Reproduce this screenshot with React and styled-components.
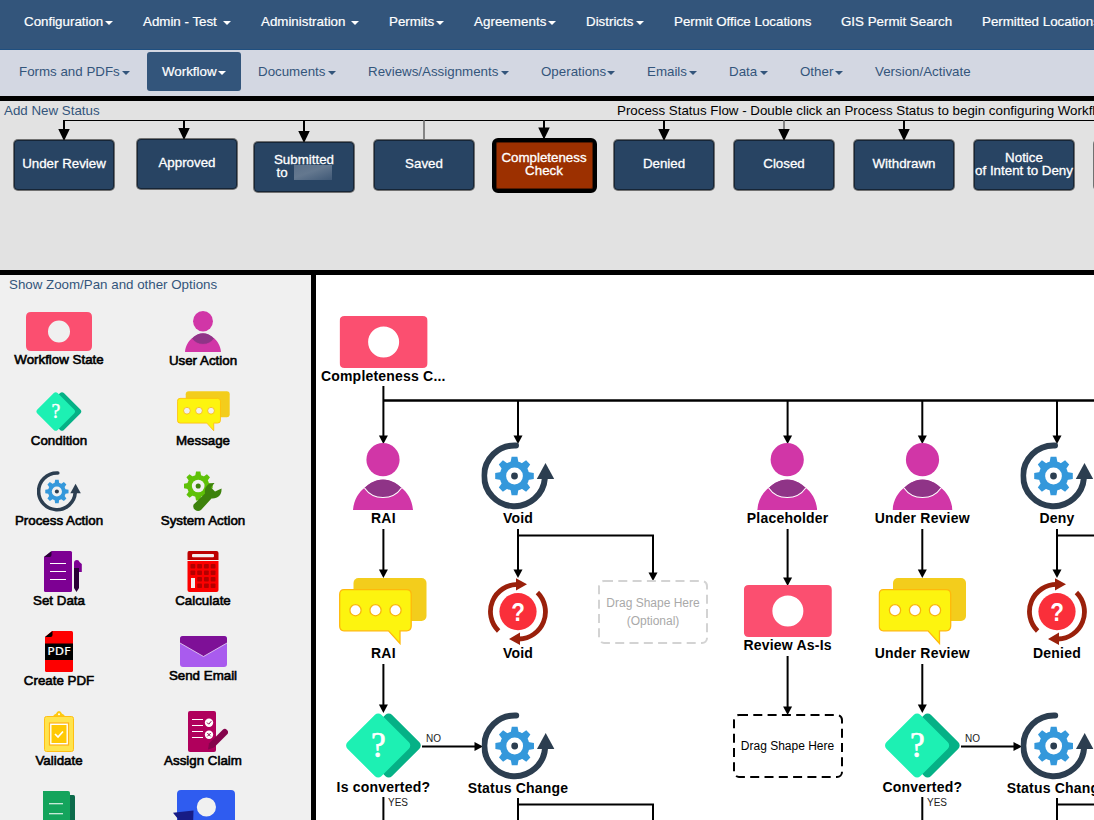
import React from 'react';
import styled, { createGlobalStyle, css } from 'styled-components';

const Global = createGlobalStyle`
  * { box-sizing: border-box; }
  html, body { margin: 0; padding: 0; overflow: hidden; }
  body { font-family: 'Liberation Sans', Arial, sans-serif; font-size: 13.33px; color: #000; }
  svg { display: block; flex: none; }
`;

/* ---------- page frame ---------- */
const Page = styled.div`
  width: 100vw;
  height: 820px;
  display: flex;
  flex-direction: column;
  background: #000;
  overflow: hidden;
`;
const TopNav = styled.nav`
  flex: 0 0 50px;
  display: flex;
  align-items: center;
  padding: 0 0 6px 9px;
  background: #33557b;
  border-bottom: 1px solid #1f4f80;
  color: #fff;
`;
const SubNav = styled.nav`
  flex: 0 0 46px;
  display: flex;
  align-items: flex-start;
  gap: 2px;
  padding: 2px 0 0 4px;
  background: #d3d7e2;
  color: #33557b;
`;
const NavItem = styled.a`
  flex: none;
  display: flex;
  align-items: center;
  justify-content: space-between;
  box-sizing: content-box;
  width: ${(p) => p.$w}px;
  height: 39px;
  padding: 0 15px;
  white-space: nowrap;
  letter-spacing: ${(p) => p.$track || 0}px;
  border-radius: 3px;
  ${(p) => p.$light && css`-webkit-text-stroke: 0.2px #fff;`}
  ${(p) => p.$active && css`
    background: #33557b;
    color: #fff;
    -webkit-text-stroke: 0.2px #fff;
  `}
`;
const Caret = styled.i`
  margin-top: 2px;
  border: 4px solid transparent;
  border-top-color: currentColor;
  border-bottom: 0;
`;
const TextLink = styled.a`
  color: #33557b;
  white-space: nowrap;
`;

const StatusPane = styled.section`
  position: relative;
  flex: 0 0 169px;
  margin-top: 5px;
  background: #e2e2e2;
  overflow: hidden;
`;
const StatusHead = styled.header`
  display: flex;
  padding-left: 4px;
  line-height: 19px;
  white-space: nowrap;
  & > a { flex: 0 0 613px; }
`;
const Workspace = styled.main`
  flex: 1;
  min-height: 0;
  margin-top: 5px;
  display: flex;
  gap: 5px;
`;
const Palette = styled.aside`
  flex: 0 0 311px;
  padding-top: 2px;
  background: #f0f0f0;
  overflow: hidden;
  & > a { display: block; padding-left: 9px; line-height: 15px; }
`;
const PaletteGrid = styled.div`
  display: grid;
  grid-template-columns: 144px 144px;
  grid-auto-rows: 80px;
  margin: 7px 0 0 -13px;
`;
const PaletteItem = styled.div`
  display: flex;
  flex-direction: column;
  align-items: center;
  justify-content: center;
`;
const PaletteLabel = styled.span`
  padding-top: 1px;
  margin-bottom: -1px;
  line-height: 16px;
  white-space: nowrap;
  -webkit-text-stroke: 0.6px #000;
`;
const Canvas = styled.section`
  position: relative;
  flex: 1;
  background: #fff;
  overflow: hidden;
`;
const EdgeLayer = styled.svg`
  position: absolute;
  inset: 0;
`;

/* ---------- diagram nodes ---------- */
const StatusNode = styled.div`
  position: absolute;
  left: ${(p) => p.$x}px;
  top: ${(p) => p.$y}px;
  width: 102px;
  height: 52px;
  display: flex;
  flex-direction: column;
  align-items: center;
  justify-content: center;
  padding-bottom: 3px;
  border: 1px solid rgba(0, 0, 0, 0.5);
  border-radius: 5px;
  background: #284463;
  background-clip: padding-box;
  box-shadow: inset 0 0 0 1px rgba(0, 0, 0, 0.45);
  color: #fff;
  line-height: 13px;
  text-align: center;
  white-space: nowrap;
  -webkit-text-stroke: 0.3px #fff;
  ${(p) => p.$selected && css`
    width: 105px;
    height: 55px;
    padding-bottom: 3px;
    border: 4px solid #000;
    border-radius: 6px;
    background: #9c3000;
  `}
`;
const Row = styled.span`
  display: flex;
  align-items: center;
  height: 13px;
`;
const Redacted = styled.span`
  width: 38px;
  height: 15px;
  margin: 0 0 0 6px;
  background: linear-gradient(160deg, #5b7089, #64788f 45%, #3f5876);
`;
const FlowNode = styled.div`
  position: absolute;
  left: ${(p) => p.$x}px;
  top: ${(p) => p.$y}px;
  transform: translateX(-50%);
  display: flex;
  flex-direction: column;
  align-items: center;
`;
const FlowLabel = styled.span`
  line-height: 16px;
  font-size: 14px;
  font-weight: bold;
  letter-spacing: 0.2px;
  white-space: nowrap;
`;
const EdgeLabel = styled.span`
  position: absolute;
  left: ${(p) => p.$x}px;
  top: ${(p) => p.$y}px;
  font-size: 10px;
  line-height: 12px;
  color: #222;
`;
const DropZone = styled.div`
  position: absolute;
  left: ${(p) => p.$x}px;
  top: ${(p) => p.$y}px;
  width: 110px;
  height: 64px;
  display: flex;
  flex-direction: column;
  align-items: center;
  justify-content: center;
  font-size: 12px;
  line-height: 18px;
  color: ${(p) => (p.$optional ? '#a9a9a9' : '#000')};
  svg { position: absolute; inset: 0; }
`;

/* ---------- icons ---------- */
const StateIcon = ({ w = 88, h = 52, r = 15.5 }) => (
  <svg width={w} height={h} viewBox={`0 0 ${w} ${h}`}>
    <path fill="#fb4f70" fillRule="evenodd" d={`M5 0H${w - 5}Q${w} 0 ${w} 5V${h - 5}Q${w} ${h} ${w - 5} ${h}H5Q0 ${h} 0 ${h - 5}V5Q0 0 5 0ZM${w / 2 - r} ${h / 2}a${r} ${r} 0 1 0 ${2 * r} 0a${r} ${r} 0 1 0 ${-2 * r} 0Z`} />
  </svg>
);
const UserIcon = ({ w = 60, h = 67, bg = '#fff' }) => (
  <svg width={w} height={h} viewBox="0 0 60 67" preserveAspectRatio="none">
    <circle cx="30" cy="16.7" r="16.6" fill="#d136a7" />
    <path d="M0 67C1 56 6 49 12 44.5C23 34 37 34 48 44.5C54 49 59 56 60 67Z" fill="#d136a7" />
    <path d="M11.5 45C23 33.5 37 33.5 48.5 45Q42 54.5 30 54.5Q18 54.5 11.5 45Z" fill="#8f3487" />
    <path d="M11.5 45Q18 54.5 30 54.5Q42 54.5 48.5 45" fill="none" stroke={bg} strokeWidth="1.1" />
  </svg>
);
const Gear = ({ cx, cy, s = 1, fill, dot, bg }) => (
  <g transform={`translate(${cx} ${cy}) scale(${s})`}>
    {[0, 45, 90, 135, 180, 225, 270, 315].map((a) => (
      <path key={a} transform={`rotate(${a})`} d="M-4.2 -12L-2.9 -19.3H2.9L4.2 -12Z" fill={fill} />
    ))}
    <circle r="14.8" fill={fill} />
    <circle r="8.4" fill={bg} />
    <circle r="3.4" fill={dot} />
  </g>
);
const ProcessIcon = ({ w = 73, h = 68, bg = '#fff' }) => (
  <svg width={w} height={h} viewBox="0 0 73 68">
    <path d="M34.5 3.4H33A30.4 30.4 0 1 0 63.4 36" fill="none" stroke="#2c3e50" strokeWidth="6" strokeLinecap="round" />
    <path d="M64 21L72.7 37H55.3Z" fill="#2c3e50" />
    <Gear cx={33} cy={34} fill="#3498db" dot="#2c3e50" bg={bg} />
  </svg>
);
const MessageIcon = ({ w = 88, h = 67, bg = '#fff' }) => (
  <svg width={w} height={h} viewBox="0 0 88 67">
    <rect x="14.5" y="0" width="73" height="43" rx="5" fill="#f3cd1c" />
    <path d="M5 11.7H67.5Q72.2 11.7 72.2 16.5V48Q72.2 52.8 67.5 52.8H61V65.5L49.5 52.8H5Q.7 52.8 .7 48V16.5Q.7 11.7 5 11.7Z" fill="#fdf40f" stroke="#ffb90a" strokeWidth="1.3" />
    {[16.5, 36.5, 56.5].map((x) => <circle key={x} cx={x} cy="32.2" r="5.6" fill={bg} stroke="#f9b50b" strokeWidth="1.3" />)}
  </svg>
);
const ConditionIcon = ({ w = 77, h = 67 }) => (
  <svg width={w} height={h} viewBox="0 0 77 67">
    <rect x="19.5" y="9.5" width="48" height="48" rx="4.5" transform="rotate(45 43.5 33.5)" fill="#05b186" />
    <rect x="9" y="9.5" width="48" height="48" rx="4.5" transform="rotate(45 33 33.5)" fill="#1df0b3" />
    <text transform="translate(33.2 44.500) scale(.92 1)" textAnchor="middle" fontFamily="Liberation Serif, serif" fontSize="36" fill="#fff" stroke="#fff" strokeWidth=".7">?</text>
  </svg>
);
const VoidIcon = () => (
  <svg width="60" height="67" viewBox="0 0 60 67">
    <g fill="none" stroke="#9a200b" strokeWidth="4.8">
      <path d="M10.6 53A27.2 27.2 0 0 1 30 6.4" />
      <path d="M49.4 14.5A27.2 27.2 0 0 1 31 61" />
    </g>
    <path d="M28 .3L39 6.2L28 12.5ZM32 54.5L21 61L32 67Z" fill="#9a200b" />
    <circle cx="30" cy="33.6" r="18.6" fill="#fa2f3a" />
    <text transform="translate(30.200 42.900) scale(.86 1)" textAnchor="middle" fontFamily="Liberation Sans, sans-serif" fontWeight="bold" fontSize="26" fill="#fff">?</text>
  </svg>
);
const SystemIcon = () => (
  <svg width="38" height="41" viewBox="0 0 38 41">
    <Gear cx={14.2} cy={15} s={0.75} fill="#5fc108" dot="#3d820c" bg="#f0f0f0" />
    <path d="M9.600 33.500L21 22.500C20 16 24 11.500 30.500 12L27 16.500L31 20.500L37.500 17.500C38 24 34 28 27.500 27.500L17 39A4.800 4.800 0 0 1 9.600 33.500Z" fill="#3d820c" />
  </svg>
);
const SetDataIcon = () => (
  <svg width="46" height="41" viewBox="36 0 46 41">
    <path d="M52 0H70.500Q72 0 72 1.500V39.500Q72 41 70.500 41H45.500Q44 41 44 39.500V6Z" fill="#7d0093" />
    <path d="M51.500 0V4Q51.500 6 49.500 6H44Z" fill="#2b0038" />
    <path d="M50 12.500H66M50 20.500H66M50 28.500H66" stroke="#fff" strokeWidth="1.100" />
    <path d="M74 18V12Q74 9 77 9Q79 9 79.500 11L81.800 13V21H79V18Z" fill="#7d0093" />
    <path d="M74 17H79V37L76.500 41L74 37Z" fill="#2b0038" />
  </svg>
);
const CalculateIcon = () => (
  <svg width="32" height="41" viewBox="0 0 32 41">
    <path d="M2 0H29.500Q31.500 0 31.500 2V9H.5V2Q.5 0 2 0Z" fill="#bd0000" />
    <rect x="5" y="3" width="22" height="3.300" rx="1" fill="#f4eded" />
    <path d="M.5 10H31.500V39Q31.500 41 29.500 41H2.500Q.5 41 .5 39Z" fill="#fc0000" />
    {[13, 19.500, 26, 32.500].map((y, r) => [3.500, 10.200, 17, 23.700].map((x, c) => (c === 0 && r > 1 ? null : (
      <rect key={`${x}-${y}`} x={x} y={y} width="4.800" height="4.600" rx=".8" fill="#b40000" />
    ))))}
    <rect x="4" y="27" width="4" height="10" fill="#f4eded" />
  </svg>
);
const PdfIcon = () => (
  <svg width="28" height="41" viewBox="0 0 28 41">
    <path d="M7 0H26.500Q28 0 28 1.500V39.500Q28 41 26.500 41H1.500Q0 41 0 39.500V6Z" fill="#fe0000" />
    <path d="M7.500 0V4Q7.500 6 5.500 6H0ZM0 12.500H28V29H0Z" fill="#000" />
    <text transform="translate(2.500 24) scale(1.200 1)" fontFamily="DejaVu Sans, sans-serif" fontSize="9.600" letterSpacing=".4" fill="#fff" stroke="#fff" strokeWidth=".2">PDF</text>
  </svg>
);
const EmailIcon = () => (
  <svg width="47" height="31" viewBox="0 0 47 31">
    <rect width="47" height="31" rx="3" fill="#a95bee" />
    <path d="M0 7V3Q0 0 3 0H44Q47 0 47 3V7L23.500 20.500Z" fill="#7e1097" />
    <path d="M0 7L23.500 20.500L47 7" fill="none" stroke="#eadcf6" strokeWidth=".8" />
  </svg>
);
const ValidateIcon = () => (
  <svg width="30" height="41" viewBox="0 0 30 41">
    <path d="M8.500 6Q10 3 12 2.700Q13 0 15 0Q17 0 18 2.700Q20 3 21.500 6Z" fill="#ffc90c" />
    <circle cx="15" cy="3.200" r="1" fill="#fff" />
    <rect x=".5" y="5.500" width="29" height="35" rx="2" fill="#ffe44d" stroke="#ffbf14" />
    <rect x="5.500" y="12" width="19" height="22" fill="#fff" stroke="#ffb319" strokeWidth="1.200" />
    <rect x="7.500" y="14" width="15" height="18" fill="#ffc905" />
    <path d="M11 23L14 26L19 20.500" fill="none" stroke="#fff" strokeWidth="1.700" />
  </svg>
);
const AssignIcon = () => (
  <svg width="50" height="41" viewBox="-10 0 50 41">
    <rect width="28" height="41" rx="2" fill="#b0005c" />
    <path d="M4 8.500H15M4 14.500H15M4 20.500H15M4 26.500H15" stroke="#fff" />
    <circle cx="21" cy="11.700" r="4.200" fill="#fff" />
    <circle cx="21" cy="23.700" r="4.200" fill="#fff" />
    <path d="M19 11.500L20.700 13.200L23.300 10.200M19.300 22L22.700 25.400M22.700 22L19.300 25.400" fill="none" stroke="#82004a" />
    <path d="M20 38.500L21 32.500L35 18.500Q37 17 39 19Q41 21 39.500 23L26 36.500Z" fill="#85044c" />
  </svg>
);
const DocumentsIcon = () => (
  <svg width="32" height="41" viewBox="0 0 32 41">
    <rect x="16" y="4" width="16" height="37" rx="1.500" fill="#0c6b4b" />
    <path d="M0 0H25Q27 0 27 2V41H0Z" fill="#14a45c" />
    <path d="M6 12.800H20M6 22.800H20" stroke="#fff" strokeWidth="1.100" />
  </svg>
);
const SubflowIcon = () => (
  <svg width="64" height="43" viewBox="-2 0 64 43">
    <path fillRule="evenodd" d="M8 0H58Q62 0 62 4V39H4V4Q4 0 8 0ZM23.800 17a9.600 9.600 0 1 0 19.200 0a9.600 9.600 0 1 0 -19.200 0Z" fill="#2f5cf0" />
    <path d="M0 22.800L20.500 20.500L20 37L0 36L5 29Z" fill="#171c86" />
  </svg>
);

/* ---------- connectors ---------- */
const Link = ({ d, w = 2, color = '#000' }) => <path d={d} fill="none" stroke={color} strokeWidth={w} />;
const Head = ({ x, y, w = 9, h = 8.5, right }) => (
  <path d={right ? `M${x - h} ${y - w / 2}V${y + w / 2}L${x} ${y}Z` : `M${x - w / 2} ${y - h}H${x + w / 2}L${x} ${y}Z`} />
);

const topItems = [
  { text: 'Configuration', w: 89, caret: true },
  { text: 'Admin - Test', w: 88, caret: true },
  { text: 'Administration', w: 98, caret: true },
  { text: 'Permits', w: 55, caret: true },
  { text: 'Agreements', w: 82, caret: true, track: 0.05 },
  { text: 'Districts', w: 58, caret: true },
  { text: 'Permit Office Locations', w: 137 },
  { text: 'GIS Permit Search', w: 111 },
  { text: 'Permitted Locations', w: 120 },
];
const subItems = [
  { text: 'Forms and PDFs', w: 111, caret: true },
  { text: 'Workflow', w: 64, caret: true },
  { text: 'Documents', w: 78, caret: true },
  { text: 'Reviews/Assignments', w: 141, caret: true },
  { text: 'Operations', w: 74, caret: true },
  { text: 'Emails', w: 50, caret: true },
  { text: 'Data', w: 39, caret: true },
  { text: 'Other', w: 43, caret: true },
  { text: 'Version/Activate', w: 95 },
];
const statuses = [
  { x: 13, y: 38, lines: ['Under Review'], arrow: true },
  { x: 136, y: 37, lines: ['Approved'], arrow: true, ax: 184 },
  { x: 253, y: 40, lines: ['Submitted', 'to'], arrow: true, redacted: true },
  { x: 373, y: 38, lines: ['Saved'], thin: true },
  { x: 491.5, y: 36.5, lines: ['Completeness', 'Check'], arrow: true, selected: true, ax: 544 },
  { x: 613, y: 38, lines: ['Denied'], arrow: true },
  { x: 733, y: 38, lines: ['Closed'], arrow: true, thin: true },
  { x: 853, y: 38, lines: ['Withdrawn'], arrow: true },
  { x: 973, y: 38, lines: ['Notice', 'of Intent to Deny'], none: true },
  { x: 1093, y: 38, lines: [''], none: true },
];
const PANEL = '#f0f0f0';
const shapes = [
  ['Workflow State', <StateIcon w={66} h={39} r={11} />],
  ['User Action', <UserIcon w={36} h={41} bg="#d136a7" />],
  ['Condition', <ConditionIcon w={46} h={41} />],
  ['Message', <MessageIcon w={53} h={41} bg={PANEL} />],
  ['Process Action', <ProcessIcon w={44} h={41} bg={PANEL} />],
  ['System Action', <SystemIcon />],
  ['Set Data', <SetDataIcon />],
  ['Calculate', <CalculateIcon />],
  ['Create PDF', <PdfIcon />],
  ['Send Email', <EmailIcon />],
  ['Validate', <ValidateIcon />],
  ['Assign Claim', <AssignIcon />],
  ['', <DocumentsIcon />],
  ['', <SubflowIcon />],
];
const C = [67.4, 202, 337, 471.6, 606.3, 741];
const nodes = [
  [C[0] - 0.1, 41, 'Completeness C...', StateIcon],
  [C[0], 168, 'RAI', UserIcon],
  [C[1], 167.4, 'Void', ProcessIcon],
  [C[3], 168, 'Placeholder', UserIcon],
  [C[4], 168, 'Under Review', UserIcon],
  [C[5], 167.4, 'Deny', ProcessIcon],
  [C[0], 303, 'RAI', MessageIcon],
  [C[1], 303, 'Void', VoidIcon],
  [C[3], 310, 'Review As-Is', StateIcon],
  [C[4], 303, 'Under Review', MessageIcon],
  [C[5], 303, 'Denied', VoidIcon],
  [C[0], 437.4, 'Is converted?', ConditionIcon],
  [C[1], 437.4, 'Status Change', ProcessIcon],
  [C[4], 437.4, 'Converted?', ConditionIcon],
  [C[5], 437.4, 'Status Change', ProcessIcon],
];
const drops = [
  [C[0], 111, 169], [C[1], 126, 169], [C[3], 126, 169], [C[4], 126, 169], [C[5], 126, 169],
  [C[0], 254, 303], [C[1], 254, 303], [C[3], 254, 311], [C[4], 254, 303], [C[5], 254, 303],
  [C[0], 389, 438], [C[4], 389, 438], [C[3], 381, 440],
];

function Bar({ items, light, current }) {
  return items.map(({ text, w, caret, track }) => (
    <NavItem key={text} $w={w} $track={track} $light={light} $active={text === current}>
      {text}{caret && <Caret />}
    </NavItem>
  ));
}

export default function App() {
  return (
    <Page>
      <Global />
      <TopNav><Bar items={topItems} light /></TopNav>
      <SubNav><Bar items={subItems} current="Workflow" /></SubNav>

      <StatusPane>
        <StatusHead>
          <TextLink>Add New Status</TextLink>
          <span>Process Status Flow - Double click an Process Status to begin configuring Workflow</span>
        </StatusHead>
        <EdgeLayer width="1094" height="169">
          <Link d="M63 19.500H1094" w={1} />
          {statuses.filter((s) => !s.none).map((s) => {
            const ax = s.ax || s.x + 51;
            return (
              <g key={s.x}>
                <Link d={`M${ax} 19V${s.y}`} w={s.thin ? 1.5 : 2} color={s.thin ? '#666' : '#000'} />
                {s.arrow && <Head x={ax} y={s.y + 2} w={11.5} h={12} />}
              </g>
            );
          })}
        </EdgeLayer>
        {statuses.map((s) => (
          <StatusNode key={s.x} $x={s.x} $y={s.y} $selected={s.selected}>
            {s.lines.map((line, i) => (
              <Row key={line}>{line}{s.redacted && i === 1 && <Redacted />}</Row>
            ))}
          </StatusNode>
        ))}
      </StatusPane>

      <Workspace>
        <Palette>
          <TextLink>Show Zoom/Pan and other Options</TextLink>
          <PaletteGrid>
            {shapes.map(([label, icon], i) => (
              <PaletteItem key={i}>{icon}<PaletteLabel>{label || '\u00a0'}</PaletteLabel></PaletteItem>
            ))}
          </PaletteGrid>
        </Palette>

        <Canvas>
          <EdgeLayer width="778" height="545">
            <Link d={`M${C[0]} 125.500H778`} w={2.6} />
            {drops.map(([x, y1, y2]) => (
              <g key={`${x}-${y1}`}><Link d={`M${x} ${y1}V${y2 - 4}`} /><Head x={x} y={y2} /></g>
            ))}
            <Link d={`M${C[1]} 260.500H${C[2]}V300`} />
            <Head x={C[2]} y={306} />
            <Link d={`M${C[5]} 260.500H778`} />
            <Link d="M106 471.500H160M645 471.500H700" />
            <Head x={167} y={471.5} right />
            <Head x={706} y={471.5} right />
            <Link d={`M${C[0]} 522V545M${C[4]} 522V545M${C[1]} 523V545M${C[1]} 529.500H${C[2]}V545M${C[5]} 523V545M${C[5]} 529.500H778`} />
          </EdgeLayer>
          {nodes.map(([x, y, label, Icon]) => (
            <FlowNode key={`${x}-${y}`} $x={x} $y={y}><Icon /><FlowLabel>{label}</FlowLabel></FlowNode>
          ))}
          <DropZone $x={282} $y={304.5} $optional>
            <svg width="110" height="64"><rect x="1" y="1" width="108" height="62" rx="5" fill="none" stroke="#d3d3d3" strokeWidth="2" strokeDasharray="9 5.300" /></svg>
            <span>Drag Shape Here</span>
            <span>(Optional)</span>
          </DropZone>
          <DropZone $x={416.5} $y={439}>
            <svg width="110" height="64"><rect x="1" y="1" width="108" height="62" rx="5" fill="none" stroke="#000" strokeWidth="2" strokeDasharray="9 5.300" /></svg>
            <span>Drag Shape Here</span>
          </DropZone>
          <EdgeLabel $x={110} $y={458}>NO</EdgeLabel>
          <EdgeLabel $x={649} $y={458}>NO</EdgeLabel>
          <EdgeLabel $x={72} $y={522}>YES</EdgeLabel>
          <EdgeLabel $x={611} $y={522}>YES</EdgeLabel>
        </Canvas>
      </Workspace>
    </Page>
  );
}
